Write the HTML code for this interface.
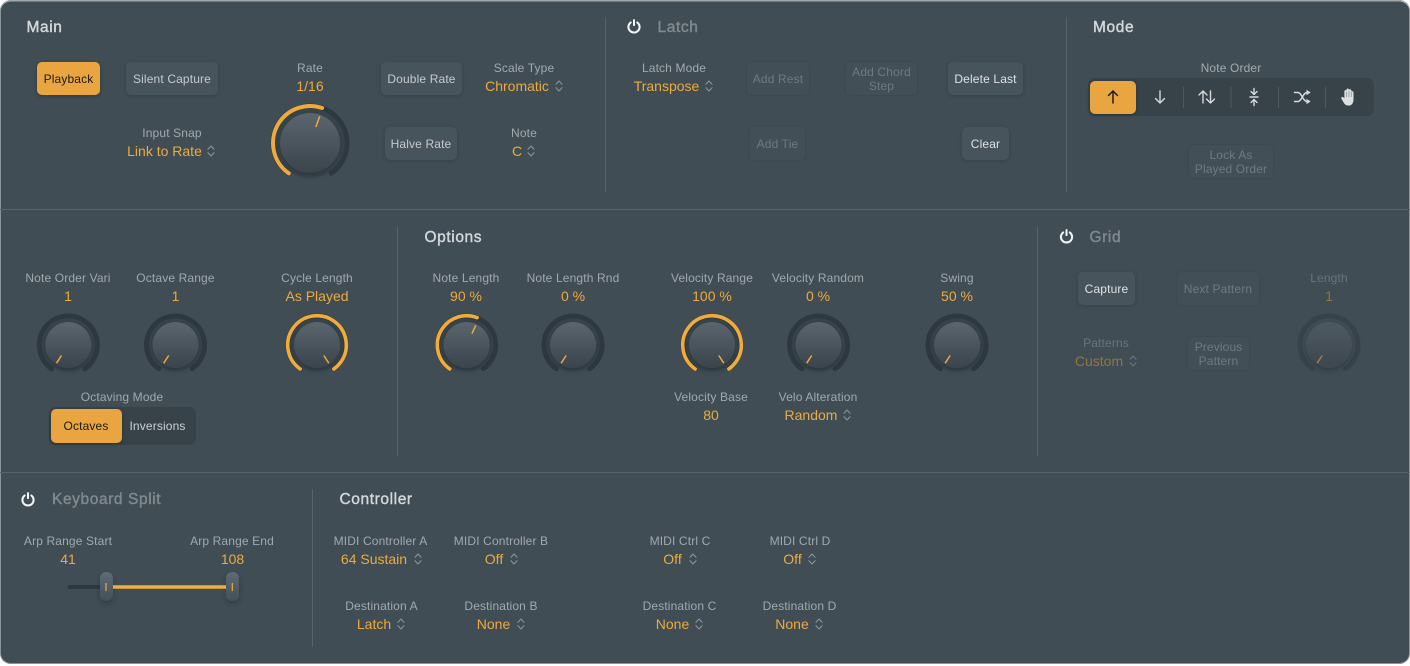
<!DOCTYPE html>
<html><head><meta charset="utf-8"><style>
html,body{margin:0;padding:0;background:#fff;width:1410px;height:666px;overflow:hidden}
body{font-family:"Liberation Sans",sans-serif;position:relative}
#p{position:absolute;left:0;top:0;width:1410px;height:664px;background:#404d55;border-radius:11px;box-shadow:inset 0 1.5px 0 #a3a8ab,inset 1px 0 0 #8b9499,inset -1px 0 0 #8b9499,inset 0 -1px 0 #8b9499;overflow:hidden}
.ln{position:absolute;background:#56636a}
.b{position:absolute;box-sizing:border-box;border-radius:5px;background:#48545c;box-shadow:0 1px 3px rgba(30,38,44,.28);color:#dfe2e3;font-size:12px;letter-spacing:.14px;line-height:14px;display:flex;align-items:center;justify-content:center;text-align:center}
.b.m{color:#c6cacc}
.b.d{background:#424f57;box-shadow:0 0 2px rgba(40,50,56,.22);color:#6f7a80}
.b.on{background:#e9a640;color:#1c1a14;box-shadow:0 1px 3px rgba(20,25,30,.4)}
.t{position:absolute;white-space:nowrap;transform:translate(-50%,-50%);line-height:16px}
.l{font-size:12px;letter-spacing:.14px;color:#a2a9ad}
.v{font-size:14px;color:#eeaa3c}
.l.d{color:#68747a}.v.d{color:#94753f}
.h{position:absolute;white-space:nowrap;transform:translateY(-50%);margin-top:1px;font-size:15.5px;letter-spacing:.6px;-webkit-text-stroke:.4px currentColor;color:#d4d8da;line-height:18px}
.h.d{color:#80898e}
svg{position:absolute;left:0;top:0}
</style></head><body><div id="p">
<div class="ln" style="left:0;top:209px;width:1410px;height:1px"></div>
<div class="ln" style="left:0;top:472px;width:1410px;height:1px"></div>
<div class="ln" style="left:605px;top:17px;width:1px;height:175px"></div>
<div class="ln" style="left:1066px;top:17px;width:1px;height:175px"></div>
<div class="ln" style="left:397px;top:227px;width:1px;height:229px"></div>
<div class="ln" style="left:1037px;top:227px;width:1px;height:229px"></div>
<div class="ln" style="left:312px;top:489px;width:1px;height:158px"></div>

<div style="position:absolute;left:1088px;top:78px;width:286px;height:38px;border-radius:7px;background:#374249"></div>
<div style="position:absolute;left:49px;top:407px;width:147px;height:38px;border-radius:7px;background:#374249"></div>

<div class="b on" style="left:37px;top:62px;width:63px;height:33px">Playback</div>
<div class="b m" style="left:126px;top:62px;width:92px;height:33px">Silent Capture</div>
<div class="b m" style="left:381px;top:62px;width:81px;height:33px">Double Rate</div>
<div class="b m" style="left:385px;top:127px;width:72px;height:33px">Halve Rate</div>
<div class="b d" style="left:747px;top:62px;width:62px;height:33px">Add Rest</div>
<div class="b d" style="left:846px;top:62px;width:71px;height:33px">Add Chord<br>Step</div>
<div class="b" style="left:948px;top:62px;width:75px;height:33px">Delete Last</div>
<div class="b d" style="left:750px;top:127px;width:55px;height:33px">Add Tie</div>
<div class="b" style="left:962px;top:127px;width:47px;height:33px">Clear</div>
<div class="b d" style="left:1189px;top:145px;width:84px;height:33px">Lock As<br>Played Order</div>
<div class="b" style="left:1078px;top:272px;width:57px;height:33px">Capture</div>
<div class="b d" style="left:1177px;top:272px;width:82px;height:33px">Next Pattern</div>
<div class="b d" style="left:1188px;top:337px;width:61px;height:33px">Previous<br>Pattern</div>
<div class="b on" style="left:50.5px;top:409px;width:71px;height:34px">Octaves</div>
<div class="t l" style="left:157.5px;top:426px;color:#cdd1d3">Inversions</div>
<div class="b on" style="left:1089.5px;top:80.5px;width:46.5px;height:33.5px"></div>

<svg width="1410" height="664" viewBox="0 0 1410 664" fill="none">
<defs>
<linearGradient id="g" x1="0" y1="0" x2="0" y2="1"><stop offset="0" stop-color="#5b656e"/><stop offset="1" stop-color="#3a444c"/></linearGradient>
<linearGradient id="gd" x1="0" y1="0" x2="0" y2="1"><stop offset="0" stop-color="#4e5961"/><stop offset="1" stop-color="#3c474f"/></linearGradient>
<linearGradient id="hd" x1="0" y1="0" x2="0" y2="1"><stop offset="0" stop-color="#5f6a74"/><stop offset="1" stop-color="#454f58"/></linearGradient>
<filter id="s" x="-40%" y="-40%" width="180%" height="180%"><feDropShadow dx="0" dy="2.5" stdDeviation="2.5" flood-color="#1f282e" flood-opacity=".5"/></filter>
<g id="k">
<circle r="29" stroke="#2e393f" stroke-width="5" stroke-linecap="round" pathLength="360" stroke-dasharray="290 70" transform="rotate(125)"/>
<circle r="26.5" fill="#38444b"/>
<circle r="23" fill="url(#g)" filter="url(#s)"/>
</g>
<g id="kd">
<circle r="29" stroke="#36434a" stroke-width="5" stroke-linecap="round" pathLength="360" stroke-dasharray="290 70" transform="rotate(125)"/>
<circle r="23" fill="url(#gd)" filter="url(#s)"/>
</g>
<g id="K">
<circle r="37" stroke="#2e393f" stroke-width="5" stroke-linecap="round" pathLength="360" stroke-dasharray="290 70" transform="rotate(125)"/>
<circle r="34.5" fill="#38444b"/>
<circle r="30" fill="url(#g)" filter="url(#s)"/>
</g>
<path id="st" d="M-3.1-1.7 0-5 3.1-1.7M-3.1 1.7 0 5 3.1 1.7" stroke="#8f989d" stroke-width="1" stroke-linecap="round" stroke-linejoin="round"/>
<g id="pw" stroke="#f4f5f5" stroke-width="2" stroke-linecap="round"><path d="M-3.3-4.1A5.6 5.6 0 1 0 3.3-4.1"/><path d="M0-6.4V-1.4"/></g>
<line id="pt" x1="0" y1="-12.5" x2="0" y2="-21.7" stroke="#eeaa3c" stroke-width="1.5"/>
</defs>

<!-- rate knob -->
<g transform="translate(310,143)"><use href="#K"/>
<circle r="37" stroke="#eeaa3c" stroke-width="4" stroke-linecap="round" pathLength="360" stroke-dasharray="164 400" transform="rotate(125)"/>
<line y1="-17" y2="-28.5" stroke="#eeaa3c" stroke-width="1.5" transform="rotate(20)"/></g>

<g transform="translate(68.3,345)"><use href="#k"/><use href="#pt" transform="rotate(-147)"/></g>
<g transform="translate(175.5,345)"><use href="#k"/><use href="#pt" transform="rotate(-147)"/></g>
<g transform="translate(317,345)"><use href="#k"/><circle r="29.3" stroke="#f0ac3b" stroke-width="3.6" stroke-linecap="round" pathLength="360" stroke-dasharray="290 70" transform="rotate(125)"/><use href="#pt" transform="rotate(147)"/></g>
<g transform="translate(466.6,345)"><use href="#k"/><circle r="29.3" stroke="#f0ac3b" stroke-width="3.6" stroke-linecap="round" pathLength="360" stroke-dasharray="166 400" transform="rotate(125)"/><use href="#pt" transform="rotate(25)"/></g>
<g transform="translate(573,345)"><use href="#k"/><use href="#pt" transform="rotate(-147)"/></g>
<g transform="translate(712,345)"><use href="#k"/><circle r="29.3" stroke="#f0ac3b" stroke-width="3.6" stroke-linecap="round" pathLength="360" stroke-dasharray="290 70" transform="rotate(125)"/><use href="#pt" transform="rotate(147)"/></g>
<g transform="translate(818.5,345)"><use href="#k"/><use href="#pt" transform="rotate(-147)"/></g>
<g transform="translate(957,345)"><use href="#k"/><use href="#pt" transform="rotate(-147)"/></g>
<g transform="translate(1329,345)"><use href="#kd"/><use href="#pt" transform="rotate(-147)" style="opacity:.55"/></g>

<!-- steppers -->
<use href="#st" x="211" y="151"/><use href="#st" x="559" y="86"/><use href="#st" x="531" y="151"/>
<use href="#st" x="709" y="86"/><use href="#st" x="847" y="415"/><use href="#st" x="1133" y="361" opacity=".6"/>
<use href="#st" x="418" y="559"/><use href="#st" x="514" y="559"/><use href="#st" x="693" y="559"/><use href="#st" x="812" y="559"/>
<use href="#st" x="401" y="624"/><use href="#st" x="521" y="624"/><use href="#st" x="699" y="624"/><use href="#st" x="819" y="624"/>

<!-- power -->
<use href="#pw" x="634" y="26.5"/><use href="#pw" x="1066.5" y="236.5"/><use href="#pw" x="28" y="499.5"/>

<!-- slider -->
<line x1="69.5" y1="587" x2="102" y2="587" stroke="#2e393f" stroke-width="4" stroke-linecap="round"/>
<rect x="100" y="572" width="13" height="29" rx="6" fill="url(#hd)" filter="url(#s)"/>
<rect x="226" y="572" width="13" height="29" rx="6" fill="url(#hd)" filter="url(#s)"/>
<line x1="113" y1="587" x2="226" y2="587" stroke="#f2ae3a" stroke-width="3.5"/>
<line x1="106" y1="583" x2="106" y2="591" stroke="#eeaa3c" stroke-width="1.2"/>
<line x1="232.3" y1="583" x2="232.3" y2="591" stroke="#eeaa3c" stroke-width="1.2"/>

<!-- note order -->
<g stroke="#4e5a61" stroke-width="1"><path d="M1183.5 87V108M1231 87V108M1278.5 87V108M1325.5 87V108"/></g>
<g stroke-linecap="round" stroke-linejoin="round" stroke-width="1.4" fill="none">
<path d="M1113 103V91M1108.5 95.5 1113 91 1117.5 95.5" stroke="#15130f"/>
<g stroke="#d7dadb">
<path d="M1160 91V103M1155.5 98.5 1160 103 1164.5 98.5"/>
<path d="M1203 103V91M1199 95 1203 91 1207 95M1210.5 91V103M1206.5 99 1210.5 103 1214.5 99"/>
<path d="M1254 88.5V94.5M1251 91.5 1254 94.5 1257 91.5M1254 105.5V99.5M1251 102.5 1254 99.5 1257 102.5M1250 97H1258" />
<path d="M1294.5 92.5H1298C1301.5 92.5 1303 101.5 1307 101.5H1309.5M1294.5 101.5H1298C1301.5 101.5 1303 92.5 1307 92.5H1309.5"/>
</g></g>
<path d="M1306.5 89.8 1310.5 92.5 1306.5 95.2ZM1306.5 98.8 1310.5 101.5 1306.5 104.2Z" fill="#d7dadb"/>
<path d="M1344.5 103.5C1343.5 101.5 1341 98.5 1341.6 97.5 1342.4 96.6 1343.7 97.6 1344.6 98.8V91.5C1344.6 89.8 1346.4 89.8 1346.6 91.5V96 90C1346.6 88.3 1348.8 88.3 1348.9 90V96 90.6C1349 89 1351.1 89 1351.2 90.6V96.5 92.4C1351.3 91 1353.2 91 1353.3 92.4V99C1353.3 102.5 1352 105 1349.5 105.3 1347.2 105.5 1345.5 105 1344.5 103.5Z" fill="#dde0e1" stroke="#dde0e1" stroke-width=".5"/>
<path d="M1346.7 92V97M1349 91V97M1351.2 92V97" stroke="#5a666c" stroke-width=".5"/>
</svg>

<div class="h" style="left:26.5px;top:26.5px">Main</div>
<div class="h d" style="left:657.5px;top:26.5px">Latch</div>
<div class="h" style="left:1093px;top:26.5px">Mode</div>
<div class="h" style="left:424.5px;top:236.5px">Options</div>
<div class="h d" style="left:1089.5px;top:236.5px">Grid</div>
<div class="h d" style="left:52px;top:499px">Keyboard Split</div>
<div class="h" style="left:339.5px;top:499px">Controller</div>

<div class="t l" style="left:310px;top:68px">Rate</div><div class="t v" style="left:310px;top:86px">1/16</div>
<div class="t l" style="left:172px;top:133px">Input Snap</div><div class="t v" style="left:164.5px;top:151px">Link to Rate</div>
<div class="t l" style="left:524px;top:68px">Scale Type</div><div class="t v" style="left:517px;top:86px">Chromatic</div>
<div class="t l" style="left:524px;top:133px">Note</div><div class="t v" style="left:517px;top:151px">C</div>
<div class="t l" style="left:674px;top:68px">Latch Mode</div><div class="t v" style="left:666.5px;top:86px">Transpose</div>
<div class="t l" style="left:1231px;top:68px">Note Order</div>

<div class="t l" style="left:68px;top:278px">Note Order Vari</div><div class="t v" style="left:68px;top:296px">1</div>
<div class="t l" style="left:175.5px;top:278px">Octave Range</div><div class="t v" style="left:175.5px;top:296px">1</div>
<div class="t l" style="left:317px;top:278px">Cycle Length</div><div class="t v" style="left:317px;top:296px">As Played</div>
<div class="t l" style="left:122px;top:397px">Octaving Mode</div>
<div class="t l" style="left:466px;top:278px">Note Length</div><div class="t v" style="left:466px;top:296px">90 %</div>
<div class="t l" style="left:573px;top:278px">Note Length Rnd</div><div class="t v" style="left:573px;top:296px">0 %</div>
<div class="t l" style="left:712px;top:278px">Velocity Range</div><div class="t v" style="left:712px;top:296px">100 %</div>
<div class="t l" style="left:818px;top:278px">Velocity Random</div><div class="t v" style="left:818px;top:296px">0 %</div>
<div class="t l" style="left:957px;top:278px">Swing</div><div class="t v" style="left:957px;top:296px">50 %</div>
<div class="t l" style="left:711px;top:397px">Velocity Base</div><div class="t v" style="left:711px;top:415px">80</div>
<div class="t l" style="left:818px;top:397px">Velo Alteration</div><div class="t v" style="left:811px;top:415px">Random</div>
<div class="t l d" style="left:1329px;top:278px">Length</div><div class="t v d" style="left:1329px;top:296px">1</div>
<div class="t l d" style="left:1106px;top:343px">Patterns</div><div class="t v d" style="left:1099px;top:361px">Custom</div>

<div class="t l" style="left:68px;top:541px">Arp Range Start</div><div class="t v" style="left:68px;top:559px">41</div>
<div class="t l" style="left:232px;top:541px">Arp Range End</div><div class="t v" style="left:232.5px;top:559px">108</div>
<div class="t l" style="left:380.5px;top:541px">MIDI Controller A</div><div class="t v" style="left:374px;top:559px">64 Sustain</div>
<div class="t l" style="left:501px;top:541px">MIDI Controller B</div><div class="t v" style="left:494px;top:559px">Off</div>
<div class="t l" style="left:680px;top:541px">MIDI Ctrl C</div><div class="t v" style="left:672.5px;top:559px">Off</div>
<div class="t l" style="left:800px;top:541px">MIDI Ctrl D</div><div class="t v" style="left:792.5px;top:559px">Off</div>
<div class="t l" style="left:381.5px;top:606px">Destination A</div><div class="t v" style="left:374px;top:624px">Latch</div>
<div class="t l" style="left:501px;top:606px">Destination B</div><div class="t v" style="left:493.5px;top:624px">None</div>
<div class="t l" style="left:679.5px;top:606px">Destination C</div><div class="t v" style="left:672.5px;top:624px">None</div>
<div class="t l" style="left:799.5px;top:606px">Destination D</div><div class="t v" style="left:792px;top:624px">None</div>
</div></body></html>
